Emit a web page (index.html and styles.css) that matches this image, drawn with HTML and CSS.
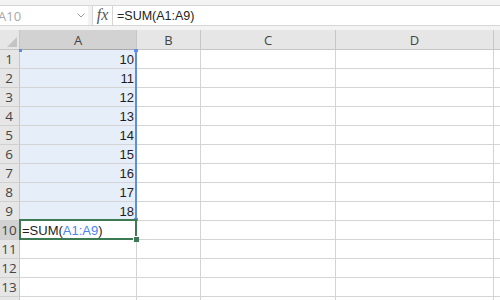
FILE: index.html
```html
<!DOCTYPE html>
<html>
<head>
<meta charset="utf-8">
<link rel="stylesheet" href="styles.css">
</head>
<body>
<div class="top">
  <div class="fbar">
    <div class="namebox"><span class="name">A10</span><span class="chev"><svg width="8" height="5" viewBox="0 0 8 5"><path d="M0.5 0.5 L4 4 L7.5 0.5" fill="none" stroke="#9a9a9a" stroke-width="1"/></svg></span></div>
    <div class="sep"></div>
    <div class="fx">fx</div>
    <div class="formula">=SUM(A1:A9)</div>
  </div>
</div>
<div class="sheet">
  <div class="grid">
    <div class="corner"><svg width="10" height="10" viewBox="0 0 10 10"><path d="M10 0 L10 10 L0 10 Z" fill="#c4c4c4"/></svg></div>
    <div class="ch sel">A</div><div class="ch">B</div><div class="ch">C</div><div class="ch">D</div><div class="ch"></div>

    <div class="rh">1</div><div class="c num rng">10</div><div class="c"></div><div class="c"></div><div class="c"></div><div class="c"></div>
    <div class="rh">2</div><div class="c num rng">11</div><div class="c"></div><div class="c"></div><div class="c"></div><div class="c"></div>
    <div class="rh">3</div><div class="c num rng">12</div><div class="c"></div><div class="c"></div><div class="c"></div><div class="c"></div>
    <div class="rh">4</div><div class="c num rng">13</div><div class="c"></div><div class="c"></div><div class="c"></div><div class="c"></div>
    <div class="rh">5</div><div class="c num rng">14</div><div class="c"></div><div class="c"></div><div class="c"></div><div class="c"></div>
    <div class="rh">6</div><div class="c num rng">15</div><div class="c"></div><div class="c"></div><div class="c"></div><div class="c"></div>
    <div class="rh">7</div><div class="c num rng">16</div><div class="c"></div><div class="c"></div><div class="c"></div><div class="c"></div>
    <div class="rh">8</div><div class="c num rng">17</div><div class="c"></div><div class="c"></div><div class="c"></div><div class="c"></div>
    <div class="rh">9</div><div class="c num rng">18</div><div class="c"></div><div class="c"></div><div class="c"></div><div class="c"></div>
    <div class="rh sel">10</div><div class="c txt">=SUM(<span class="refc">A1:A9</span>)</div><div class="c"></div><div class="c"></div><div class="c"></div><div class="c"></div>
    <div class="rh">11</div><div class="c"></div><div class="c"></div><div class="c"></div><div class="c"></div><div class="c"></div>
    <div class="rh">12</div><div class="c"></div><div class="c"></div><div class="c"></div><div class="c"></div><div class="c"></div>
    <div class="rh">13</div><div class="c"></div><div class="c"></div><div class="c"></div><div class="c"></div><div class="c"></div>
    <div class="rh"></div><div class="c"></div><div class="c"></div><div class="c"></div><div class="c"></div><div class="c"></div>
  </div>
  <div class="refbox"><span class="h tl"></span><span class="h tr"></span><span class="h br"></span></div>
  <div class="active"><span class="fill"></span></div>
</div>
</body>
</html>
```

FILE: styles.css
```css
html, body {
  margin: 0;
  padding: 0;
  width: 500px;
  height: 300px;
  overflow: hidden;
  background: #ffffff;
  font-family: "Liberation Sans", Arial, sans-serif;
}

.top {
  height: 30px;
  background: #f3f3f3;
  padding-top: 5px;
  box-sizing: border-box;
}

.fbar {
  display: flex;
  height: 21px;
  background: #ffffff;
  border-top: 1px solid #d6d6d6;
  border-bottom: 1px solid #d6d6d6;
  box-sizing: border-box;
  align-items: stretch;
}

.namebox {
  width: 88px;
  display: flex;
  align-items: center;
  justify-content: space-between;
  padding-right: 3px;
  box-sizing: border-box;
  overflow: hidden;
}

.name {
  font-family: "Open Sans", sans-serif;
  font-size: 13px;
  color: #a8a8a8;
  margin-left: -2px;
}

.chev {
  display: flex;
  align-items: center;
}

.sep {
  width: 4px;
  background: #f3f3f3;
  border-right: 1px solid #d6d6d6;
}

.fx {
  width: 20px;
  box-sizing: border-box;
  border-right: 1px solid #d6d6d6;
  font-family: "Liberation Serif", serif;
  font-style: italic;
  font-size: 16px;
  color: #555555;
  display: flex;
  align-items: center;
  justify-content: center;
  padding-bottom: 1px;
}

.formula {
  padding-left: 4px;
  font-size: 12.5px;
  color: #222222;
  display: flex;
  align-items: center;
}

.sheet {
  position: relative;
}

.grid {
  display: grid;
  grid-template-columns: 20px 117px 64px 135px 158px 64px;
  grid-template-rows: 20px repeat(14, 19px);
}

.grid > div {
  box-sizing: border-box;
  border-right: 1px solid #d4d4d4;
  border-bottom: 1px solid #d4d4d4;
}

.corner {
  background: #e6e6e6;
  display: flex;
  align-items: flex-end;
  justify-content: flex-end;
  padding: 0 2px 2px 0;
  border-right-color: #c6c6c6 !important;
  border-bottom-color: #c6c6c6 !important;
}

.ch {
  background: #e6e6e6;
  border-right-color: #c6c6c6 !important;
  border-bottom-color: #c6c6c6 !important;
  font-family: "Open Sans", sans-serif;
  font-size: 13px;
  color: #444444;
  display: flex;
  align-items: center;
  justify-content: center;
}

.ch.sel {
  background: #d2d2d2;
  border-bottom-color: #a9a9a9 !important;
}

.rh {
  background: #e6e6e6;
  border-right-color: #c6c6c6 !important;
  border-bottom-color: #d0d0d0 !important;
  font-family: "Open Sans", sans-serif;
  font-size: 13.5px;
  color: #444444;
  display: flex;
  align-items: center;
  justify-content: center;
  padding-right: 1px;
}

.rh.sel {
  background: #d2d2d2;
}

.c {
  font-size: 13px;
  color: #1e1e1e;
  display: flex;
  align-items: center;
  white-space: nowrap;
}

.num {
  justify-content: flex-end;
  padding-right: 2px;
}

.rng {
  background: #e6eefa;
}

.txt {
  padding-left: 2px;
}

.refc {
  color: #4a86e8;
}

.refbox {
  position: absolute;
  left: 19px;
  top: 19px;
  width: 118px;
  height: 171px;
  box-sizing: border-box;
  border-right: 2px solid #5b8ee8;
}

.h {
  position: absolute;
  width: 3px;
  height: 3px;
  background: #5b8ee8;
}

.tl { left: 0; top: 0; }
.tr { right: -3px; top: 0; width: 4px; }
.br { right: -3px; bottom: -1px; width: 4px; }

.active {
  position: absolute;
  left: 19px;
  top: 189px;
  width: 118px;
  height: 21px;
  box-sizing: border-box;
  border: 2px solid #3c7a54;
}

.fill {
  position: absolute;
  right: -4px;
  bottom: -4px;
  width: 5px;
  height: 5px;
  background: #3c7a54;
  border-left: 1px solid #ffffff;
  border-top: 1px solid #ffffff;
}
```
